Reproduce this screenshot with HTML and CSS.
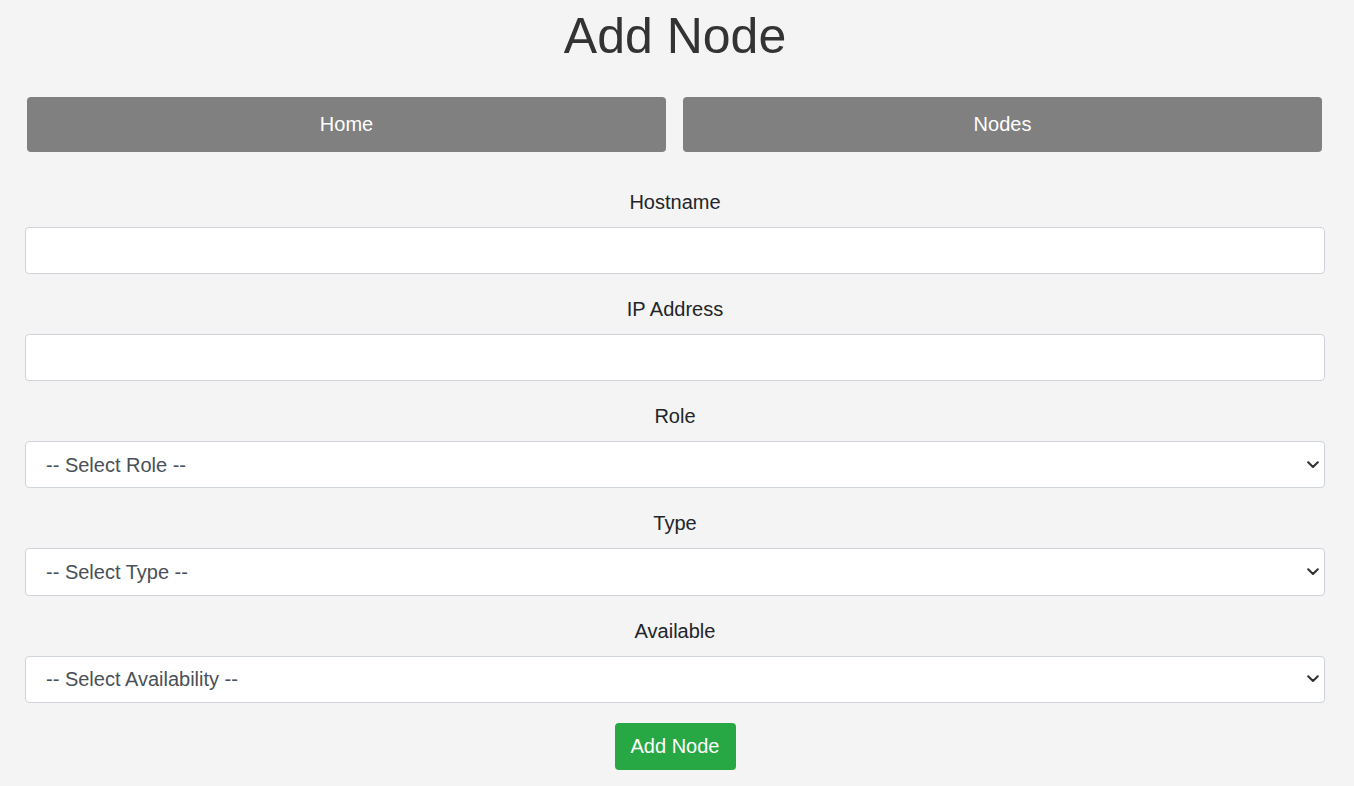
FILE: index.html
```html
<!DOCTYPE html>
<html lang="en">
<head>
<meta charset="utf-8">
<title>Add Node</title>
<link rel="stylesheet" href="styles.css">
</head>
<body>
<div class="container">
  <h1 class="title">Add Node</h1>
  <nav class="nav">
    <a class="nav-btn" href="#">Home</a>
    <a class="nav-btn" href="#">Nodes</a>
  </nav>
  <form class="form">
    <div class="field">
      <label class="label" for="hostname">Hostname</label>
      <input class="control" id="hostname" type="text">
    </div>
    <div class="field">
      <label class="label" for="ip">IP Address</label>
      <input class="control" id="ip" type="text">
    </div>
    <div class="field">
      <label class="label" for="role">Role</label>
      <select class="control select" id="role">
        <option>-- Select Role --</option>
      </select>
    </div>
    <div class="field">
      <label class="label" for="type">Type</label>
      <select class="control select" id="type">
        <option>-- Select Type --</option>
      </select>
    </div>
    <div class="field">
      <label class="label" for="available">Available</label>
      <select class="control select" id="available">
        <option>-- Select Availability --</option>
      </select>
    </div>
    <div class="actions">
      <button class="submit" type="button">Add Node</button>
    </div>
  </form>
</div>
</body>
</html>
```
FILE: styles.css
```css
* { box-sizing: border-box; }
html, body {
  margin: 0;
  padding: 0;
  background: #f4f4f4;
  font-family: "Liberation Sans", Arial, sans-serif;
  color: #212529;
}
.container {
  width: 1300px;
  margin: 0 0 0 25px;
}
.title {
  margin: 6px 0 0;
  font-size: 50px;
  line-height: 60px;
  font-weight: 400;
  color: #333;
  text-align: center;
}
.nav {
  display: flex;
  gap: 17px;
  margin: 31px 3px 0 2px;
}
.nav-btn {
  flex: 1;
  height: 55px;
  display: flex;
  align-items: center;
  justify-content: center;
  background: #808080;
  color: #fff;
  text-decoration: none;
  font-size: 20px;
  border-radius: 4px;
}
.form {
  margin-top: 35px;
}
.field {
  display: flex;
  flex-direction: column;
  margin-bottom: 20px;
}
.label {
  font-size: 20px;
  line-height: 30px;
  text-align: center;
  margin-bottom: 10px;
  color: #212529;
}
.control {
  width: 100%;
  height: 47px;
  padding: 0 20px;
  font-family: "Liberation Sans", Arial, sans-serif;
  font-size: 20px;
  color: #495057;
  background-color: #fff;
  border: 1px solid #ced4da;
  border-radius: 4px;
  outline: none;
}
.select {
  height: 47.3px;
  -webkit-appearance: none;
  appearance: none;
  padding-right: 36px;
  background-image: url("data:image/svg+xml,%3Csvg xmlns='http://www.w3.org/2000/svg' width='12' height='8' viewBox='0 0 12 8'%3E%3Cpath d='M1.2 1.3 L6 6 L10.8 1.3' fill='none' stroke='%23333' stroke-width='2.1' stroke-linecap='round' stroke-linejoin='round'/%3E%3C/svg%3E");
  background-repeat: no-repeat;
  background-position: right 5px center;
  background-size: 12px 8px;
}
.actions {
  display: flex;
  justify-content: center;
}
.submit {
  width: 121px;
  height: 47px;
  background: #28a745;
  color: #fff;
  border: none;
  border-radius: 4px;
  font-family: "Liberation Sans", Arial, sans-serif;
  font-size: 20px;
  cursor: pointer;
}
```
